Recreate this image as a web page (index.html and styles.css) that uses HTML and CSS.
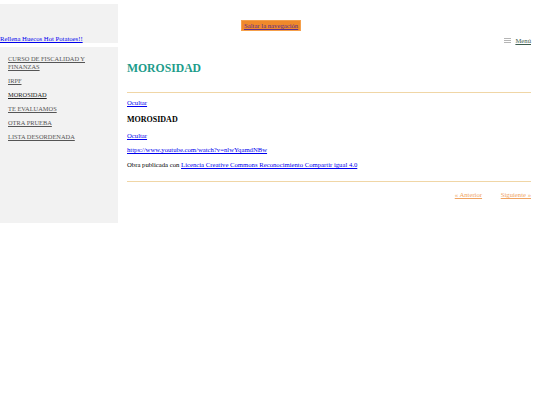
FILE: index.html
```html
<!DOCTYPE html>
<html lang="es">
<head>
    <meta charset="UTF-8">
    <title>MOROSIDAD</title>
    <link rel="stylesheet" href="styles.css">
</head>
<body>
    <a class="skip" href="#main">Saltar la navegación</a>
    <div class="page">
        <div class="side">
            <div class="header">
                <a href="#">Rellena Huecos Hot Potatoes!!</a>
            </div>
            <ul class="nav">
                <li><a href="#">CURSO DE FISCALIDAD Y FINANZAS</a></li>
                <li><a href="#">IRPF</a></li>
                <li><a href="#" class="current">MOROSIDAD</a></li>
                <li><a href="#">TE EVALUAMOS</a></li>
                <li><a href="#">OTRA PRUEBA</a></li>
                <li><a href="#">LISTA DESORDENADA</a></li>
            </ul>
        </div>
        <div class="main" id="main">
            <div class="toggle">
                <svg class="burger" width="7" height="5" viewBox="0 0 7 5"><path d="M0 0.5H7M0 2.5H7M0 4.5H7" stroke="#b5b5b5" stroke-width="1"/></svg>
                <a href="#">Menú</a>
            </div>
            <h1 class="title">MOROSIDAD</h1>
            <div class="content">
                <p><a href="#">Ocultar</a></p>
                <h2>MOROSIDAD</h2>
                <p><a href="#">Ocultar</a></p>
                <p><a href="#">https://www.youtube.com/watch?v=nlwYqamdNBw</a></p>
                <p>Obra publicada con <a href="#">Licencia Creative Commons Reconocimiento Compartir igual 4.0</a></p>
            </div>
            <div class="pager">
                <a href="#">« Anterior</a>
                <a href="#">Siguiente »</a>
            </div>
        </div>
    </div>
</body>
</html>
```

FILE: styles.css
```css
body {
    margin: 0;
    font-family: "Liberation Serif", "Times New Roman", serif;
    font-size: 6.7px;
    color: #000;
    background: #fff;
}
a { color: #0000ee; }
.skip {
    position: absolute;
    top: 20px;
    left: 241px;
    background: #f0892a;
    color: #5b2d8c;
    padding: 1px 2px;
    line-height: 7px;
    border: 1px solid #f5a04c;
}
.page {
    display: flex;
}
.side {
    width: 118px;
    flex-shrink: 0;
}
.header {
    margin-top: 4px;
    height: 39px;
    background: #f2f2f2;
    display: flex;
    align-items: flex-end;
}
.header a { line-height: 8px; }
.nav {
    list-style: none;
    margin: 4px 0 0;
    padding: 8px 6px 0 8px;
    height: 168px;
    background: #f2f2f2;
}
.nav li { margin-bottom: 6px; line-height: 8px; }
.nav a { color: #555; font-size: 6.4px; }
.nav a.current { color: #222; }
.main {
    margin-left: 9px;
    width: 404px;
}
.toggle {
    margin-top: 36px;
    display: flex;
    justify-content: flex-end;
    align-items: center;
    line-height: 9px;
}
.burger { margin-right: 4px; }
.toggle a { color: #3d5c4e; }
.title {
    margin: 17px 0 0;
    color: #1c9c8a;
    font-size: 11.7px;
    padding-bottom: 17px;
    border-bottom: 1px solid #f0d6a6;
}
.content { padding-top: 6px; }
.content p { margin: 0 0 7px; line-height: 8px; }
.content p:first-child { margin-bottom: 0; }
.content p:nth-of-type(2) { margin-bottom: 6px; }
.content h2 { font-size: 8px; margin: 8px 0 8px; line-height: 9px; }
.pager {
    border-top: 1px solid #f0d6a6;
    margin-top: 12px;
    padding-top: 9px;
    text-align: right;
}
.pager a { color: #f0a462; margin-left: 17px; }
```
